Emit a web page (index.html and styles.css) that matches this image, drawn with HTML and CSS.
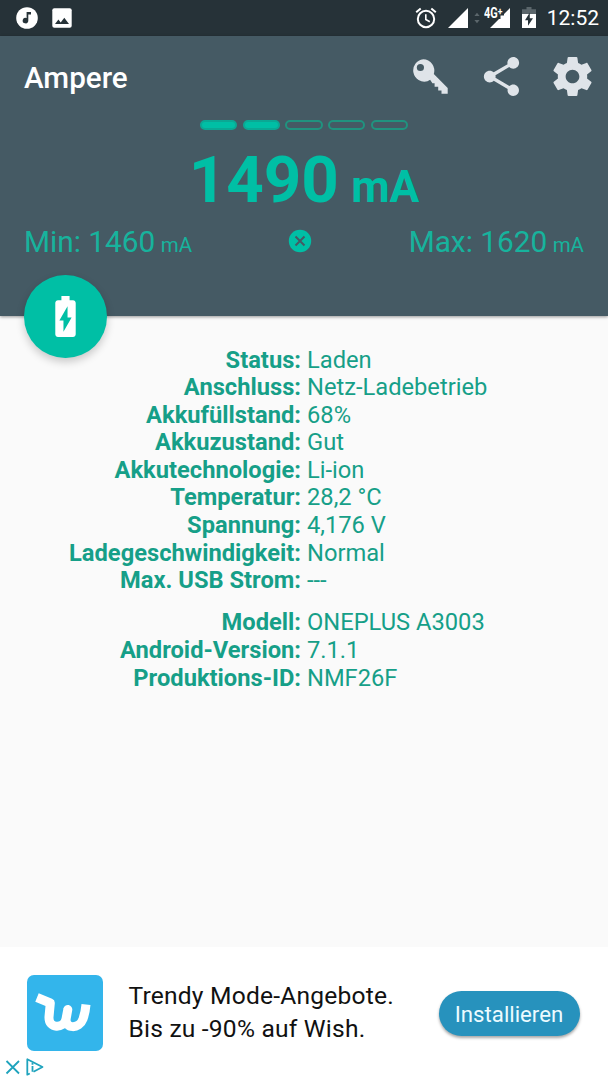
FILE: index.html
```
<!DOCTYPE html>
<html lang="de">

<head>
	<meta charset="utf-8" />
	<title>Ampere</title>
	<meta name="viewport" content="width=device-width, initial-scale=1.0">
	<link rel="stylesheet" href="styles.css">
</head>

<body>
	<div class="status-bar">
		<div class="notifications">
			<svg width="22" height="22" viewBox="0 0 22 22">
				<circle cx="11" cy="11" r="10.8" fill="#fff"/>
				<path d="M10.6 5H15v2.4h-2.7v6.2a2.8 2.8 0 1 1-1.7-2.6z" fill="#263238"/>
			</svg>
			<svg width="20" height="20" viewBox="0 0 20 20">
				<rect x="0.3" y="0.3" width="19.4" height="19.4" rx="2" fill="#fff"/>
				<path d="M3 16l3.4-4.4 2.3 2.8 3.6-4.6L17 16z" fill="#263238"/>
			</svg>
		</div>
		<div class="system">
			<svg class="alarm" width="22" height="22" viewBox="0 0 22 22" fill="none" stroke="#fff">
				<circle cx="11" cy="12" r="8.2" stroke-width="2"/>
				<path d="M10.8 7.3v5.2l4 2.3" stroke-width="1.6"/>
				<path d="M1.2 5.2L5.7 1.4M20.8 5.2l-4.5-3.8" stroke-width="2"/>
			</svg>
			<svg class="signal" width="20" height="20" viewBox="0 0 20 20">
				<path d="M20 0v20H0z" fill="#fff"/>
			</svg>
			<svg class="arrows" width="6" height="12" viewBox="0 0 6 12" fill="#5b666b">
				<path d="M0.4 4L3 0.8 5.6 4zM0.4 8L3 11.2 5.6 8z"/>
			</svg>
			<div class="mobile">
				<svg width="20" height="20" viewBox="0 0 20 20">
					<path d="M20 0v20H0l9-9h1.500V7.500H14V6z" fill="#fff"/>
				</svg>
				<span class="network">4G<sup>+</sup></span>
			</div>
			<svg class="battery" width="14" height="21" viewBox="0 0 14 21">
				<path d="M4.5 0h5v2.2H14V8H0V2.2h4.5z" fill="#5b666b"/>
				<path d="M0 7h14v14H0z" fill="#fff"/>
				<path d="M7.8 5.5v5.7H11l-5 7.6v-5.6H3z" fill="#263238"/>
			</svg>
			<span class="clock">12:52</span>
		</div>
	</div>

	<div class="header">
		<div class="toolbar">
			<h1>Ampere</h1>
			<div class="actions">
				<svg width="36" height="36" viewBox="0 0 36 36">
					<path fill-rule="evenodd" d="M11.2 0.3a11.2 11.2 0 0 1 10.6 14.6L35.7 29v5.7h-6.2v-3.2h-3.3v-3.8h-3.6v-3.5h-2.2l-2.3-3.5-2.6 1.5A11.2 11.2 0 1 1 11.2.3zM8.4 4.9a3.6 3.6 0 1 0 0 7.2 3.6 3.6 0 0 0 0-7.2z"/>
				</svg>
				<svg width="47" height="47" viewBox="0 0 24 24">
					<path d="M18 16.08c-.76 0-1.44.3-1.96.77L8.91 12.7c.05-.23.09-.46.09-.7s-.04-.47-.09-.7l7.05-4.11c.54.5 1.25.81 2.04.81 1.66 0 3-1.34 3-3s-1.34-3-3-3-3 1.34-3 3c0 .24.04.47.09.7L8.04 9.81C7.5 9.31 6.79 9 6 9c-1.66 0-3 1.34-3 3s1.34 3 3 3c.79 0 1.5-.31 2.04-.81l7.12 4.16c-.05.21-.08.43-.08.65 0 1.61 1.31 2.92 2.92 2.92s2.92-1.31 2.92-2.92-1.31-2.92-2.92-2.92z"/>
				</svg>
				<svg width="47" height="47" viewBox="0 0 24 24">
					<path d="M19.43 12.98c.04-.32.07-.64.07-.98s-.03-.66-.07-.98l2.11-1.65c.19-.15.24-.42.12-.64l-2-3.46c-.12-.22-.39-.3-.61-.22l-2.49 1c-.52-.4-1.08-.73-1.69-.98l-.38-2.65C14.46 2.18 14.25 2 14 2h-4c-.25 0-.46.18-.49.42l-.38 2.65c-.61.25-1.17.59-1.69.98l-2.49-1c-.23-.09-.49 0-.61.22l-2 3.46c-.13.22-.07.49.12.64l2.11 1.65c-.04.32-.07.65-.07.98s.03.66.07.98l-2.11 1.65c-.19.15-.24.42-.12.64l2 3.46c.12.22.39.3.61.22l2.49-1c.52.4 1.08.73 1.69.98l.38 2.65c.03.24.24.42.49.42h4c.25 0 .46-.18.49-.42l.38-2.65c.61-.25 1.17-.59 1.69-.98l2.49 1c.23.09.49 0 .61-.22l2-3.46c.12-.22.07-.49-.12-.64l-2.11-1.65zM12 15.5c-1.93 0-3.5-1.57-3.5-3.5s1.57-3.5 3.5-3.5 3.5 1.57 3.5 3.5-1.57 3.5-3.5 3.5z"/>
				</svg>
			</div>
		</div>
		<div class="level">
			<span class="on"></span>
			<span class="on"></span>
			<span></span>
			<span></span>
			<span></span>
		</div>
		<div class="current">1490 <small>mA</small></div>
		<div class="range">
			<div>Min: 1460 <small>mA</small></div>
			<svg width="24" height="24" viewBox="0 0 24 24">
				<circle cx="12" cy="12" r="11.2" fill="#00bfa5"/>
				<path d="M7.5 7.5l9 9M16.5 7.5l-9 9" stroke="#455a64" stroke-width="2"/>
			</svg>
			<div>Max: 1620 <small>mA</small></div>
		</div>
		<div class="fab">
			<svg width="49" height="49" viewBox="0 0 24 24">
				<path fill="#fff" d="M15.67 4H14V2h-4v2H8.33C7.6 4 7 4.6 7 5.33v15.33C7 21.4 7.6 22 8.33 22h7.33c.74 0 1.34-.6 1.34-1.33V5.33C17 4.6 16.4 4 15.67 4zM11 19.5v-5.5H9L13 7v5.5h2L11 19.5z"/>
			</svg>
		</div>
	</div>

	<div class="info">
		<dl>
			<dt>Status:</dt><dd>Laden</dd>
			<dt>Anschluss:</dt><dd>Netz-Ladebetrieb</dd>
			<dt>Akkufüllstand:</dt><dd>68%</dd>
			<dt>Akkuzustand:</dt><dd>Gut</dd>
			<dt>Akkutechnologie:</dt><dd>Li-ion</dd>
			<dt>Temperatur:</dt><dd>28,2 °C</dd>
			<dt>Spannung:</dt><dd>4,176 V</dd>
			<dt>Ladegeschwindigkeit:</dt><dd>Normal</dd>
			<dt>Max. USB Strom:</dt><dd>---</dd>
		</dl>
		<dl>
			<dt>Modell:</dt><dd>ONEPLUS A3003</dd>
			<dt>Android-Version:</dt><dd>7.1.1</dd>
			<dt>Produktions-ID:</dt><dd>NMF26F</dd>
		</dl>
	</div>

	<div class="ad">
		<svg class="logo" width="76" height="76" viewBox="0 0 76 76">
			<rect width="76" height="76" rx="7" fill="#33b5eb"/>
			<path d="M10 22.500L23.300 28 22 42c-.5 12 14.500 12 17 2l1.800-9.500-1.600 9c-1.500 10.500 13 11 16.800.5 2-5.500 2.500-9 3-14.500" fill="none" stroke="#fff" stroke-width="9" stroke-linejoin="round"/>
		</svg>
		<p>Trendy Mode-Angebote.<br>Bis zu -90% auf Wish.</p>
		<button>Installieren</button>
		<div class="ad-choices">
			<svg width="39" height="18" viewBox="0 0 39 18" fill="none" stroke="#1fa3bd" stroke-width="1.8">
				<path d="M1.5 3l12.5 12.5M14 3L1.5 15.5"/>
				<path d="M28.500 13.700L37.500 9 22.300 1.300v15.400l2.500-1.200" stroke-linejoin="round"/>
				<path d="M27.500 8v5.800M27.500 4.800v1.900"/>
			</svg>
		</div>
	</div>
</body>

</html>
```

FILE: styles.css
```
* {
	box-sizing: border-box;
}

body {
	display: flex;
	flex-direction: column;
	height: 1080px;
	margin: 0;
	background-color: #fafafa;
	font-family: Roboto, sans-serif;
	overflow: hidden;
}

svg {
	display: block;
	flex: none;
}

.status-bar {
	display: flex;
	justify-content: space-between;
	align-items: center;
	height: 35.5px;
	padding: 0 9px 0 16px;
	background-color: #263238;
	color: white;
}

.notifications,
.system {
	display: flex;
	align-items: center;
}

.notifications {
	gap: 14px;
}

.alarm {
	margin-right: 11px;
}

.signal {
	margin-right: 6px;
}

.arrows {
	margin-right: 10px;
}

.mobile {
	position: relative;
	margin-right: 12px;
}

.network {
	position: absolute;
	top: -1px;
	left: -6px;
	font-size: 14px;
	font-weight: 700;
	line-height: 12px;
	white-space: nowrap;
	transform: scaleX(0.78);
	transform-origin: left;
}

.network sup {
	font-size: 11px;
	line-height: 0;
	vertical-align: 3px;
}

.battery {
	margin-right: 11px;
}

.clock {
	font-size: 21px;
	line-height: 24px;
}

.header {
	position: relative;
	height: 280.5px;
	background-color: #455a64;
	color: #00bfa5;
	box-shadow: 0 1px 3px rgba(0, 0, 0, 0.4);
}

.toolbar {
	display: flex;
	justify-content: space-between;
	align-items: center;
	height: 82.5px;
	padding: 0 12px 0 24px;
}

.toolbar h1 {
	margin: 3px 0 0;
	color: white;
	font-size: 29.6px;
	font-weight: 500;
}

.actions {
	display: flex;
	align-items: center;
	gap: 24px;
	fill: #dfe4e9;
}

.actions svg:first-child {
	margin-right: 6px;
}

.level {
	display: flex;
	justify-content: center;
	gap: 5.3px;
	margin-top: 2px;
}

.level span {
	width: 37.4px;
	height: 10px;
	border: 2px solid #20937f;
	border-radius: 5px;
}

.level .on {
	border-color: #0ba894;
	background-color: #00bfa5;
}

.current {
	margin-top: 10.5px;
	font-size: 65.5px;
	font-weight: 700;
	line-height: 78px;
	text-align: center;
}

.current small {
	margin-left: -4px;
	font-size: 44.3px;
}

.range {
	display: flex;
	justify-content: space-between;
	align-items: center;
	margin: -2px 24px 0;
	color: #17b39d;
	font-size: 29.8px;
	line-height: 35px;
}

.range svg {
	margin-top: -5px;
}

.range small {
	margin-left: -2px;
	font-size: 20.5px;
}

.fab {
	position: absolute;
	bottom: -41.5px;
	left: 24px;
	display: flex;
	justify-content: center;
	align-items: center;
	width: 82.5px;
	height: 82.5px;
	border-radius: 50%;
	background-color: #00bfa5;
	box-shadow: 0 4px 8px rgba(0, 0, 0, 0.2);
}

.info {
	flex: 1;
	padding-top: 30.5px;
	color: #169f88;
	font-size: 23.7px;
	line-height: 27.6px;
}

.info dl {
	display: grid;
	grid-template-columns: 301px 1fr;
	column-gap: 6px;
	margin: 0 0 14.5px;
}

.info dt {
	font-weight: 700;
	text-align: right;
}

.info dd {
	margin: 0;
}

.ad {
	position: relative;
	display: flex;
	align-items: center;
	height: 133px;
	padding: 0 28.5px 0 26.5px;
	background-color: white;
}

.logo {
	margin-top: -2px;
}

.ad p {
	margin: -2px auto 0 26px;
	color: #111;
	font-size: 24.6px;
	letter-spacing: 0.2px;
	line-height: 32.6px;
}

.ad button {
	width: 141px;
	height: 45px;
	padding: 0;
	border: none;
	border-radius: 23px;
	background-color: #2792bd;
	box-shadow: 0 2px 3px rgba(0, 0, 0, 0.35);
	color: #ecfbff;
	font-family: inherit;
	font-size: 22.2px;
}

.ad-choices {
	position: absolute;
	bottom: 4px;
	left: 5px;
}
```
